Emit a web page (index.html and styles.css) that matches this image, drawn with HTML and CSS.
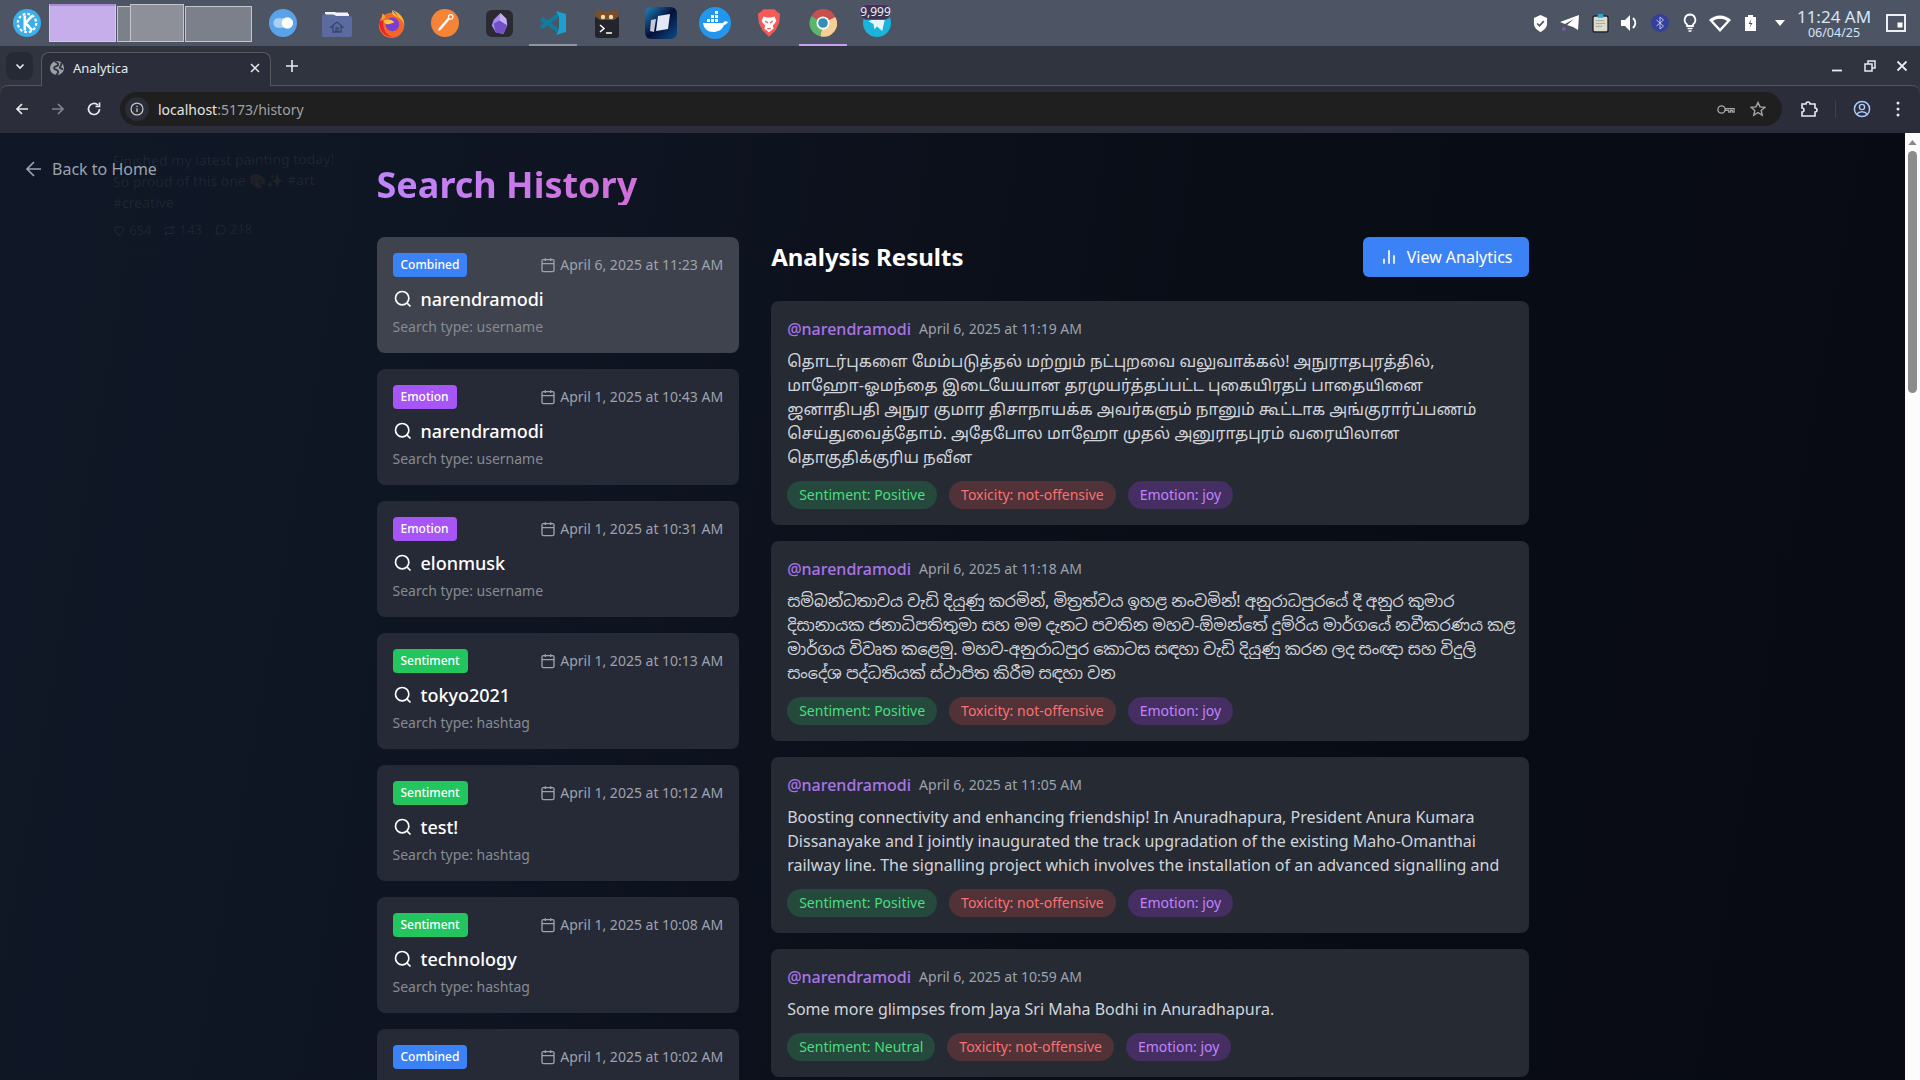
FILE: index.html
```html
<!DOCTYPE html>
<html lang="en">

    <head>
        <meta charset="UTF-8">
        <title>Analytica</title>
        <link rel="stylesheet" href="styles.css">
    </head>

    <body>
        <div class="taskbar">
            <div class="launcher">
                <svg viewBox="0 0 32 32" width="28" height="28">
                    <circle cx="16" cy="16" r="16" fill="#3daee9" />
                    <circle cx="16" cy="16" r="10.5" fill="none" stroke="#fff" stroke-width="2.6" stroke-dasharray="3.2 2.3" />
                    <path d="M13 8v16" stroke="#3daee9" stroke-width="6" />
                    <path d="M13.5 7.5v17M22 7.5l-7.5 8.5 7.5 8.5" fill="none" stroke="#fff" stroke-width="3" />
                </svg>
            </div>
            <div class="pager">
                <span class="desk desk-active"></span>
                <span class="desk"><i class="desk-win"></i></span>
                <span class="desk"></span>
            </div>
            <div class="apps">
                <span class="app">
                    <svg viewBox="0 0 32 32" width="28" height="28">
                        <circle cx="16" cy="16" r="16" fill="#5aa2ea" />
                        <rect x="5" y="10.5" width="22" height="11" rx="5.5" fill="#a9d0f5" />
                        <circle cx="21" cy="16" r="6.5" fill="#fff" />
                    </svg>
                </span>
                <span class="app">
                    <svg viewBox="0 0 30 28" width="30" height="28">
                        <path d="M3 3h10l2 2h12v6H3z" fill="#eeeef4" />
                        <path d="M0 7a2 2 0 0 1 2-2h9l3 2h14a2 2 0 0 1 2 2v17a2 2 0 0 1-2 2H2a2 2 0 0 1-2-2z" fill="#5c6b9f" />
                        <rect x="4" y="3.5" width="22" height="2" fill="#f4f4f8" />
                        <path d="M15 13l-6 5h2v5h8v-5h2zM14 23v-4h2v4" fill="none" stroke="#39446d" stroke-width="1.3" />
                    </svg>
                </span>
                <span class="app">
                    <svg viewBox="0 0 32 32" width="29" height="29">
                        <circle cx="16" cy="18" r="14" fill="#f4672b" />
                        <path d="M17 1c4 3 5 5 6 8 4 2 7 6 7 10 1-8-4-15-13-18z" fill="#fbb03b" />
                        <path d="M17 1c-1 4 1 7 6 8-3-3-4-5-6-8z" fill="#fcc73f" />
                        <circle cx="17" cy="17" r="7.5" fill="#7a3ed0" />
                        <path d="M7 13c4-2 10-2 12 2-3 1-7 3-10 1z" fill="#fdc63f" />
                        <path d="M2 13c0 10 6 18 15 18-7-2-11-9-10-18z" fill="#e8252a" />
                        <path d="M6 5c2 1 3 3 3 5l-4 2z" fill="#f9a13a" />
                    </svg>
                </span>
                <span class="app">
                    <svg viewBox="0 0 32 32" width="28" height="28">
                        <circle cx="16" cy="16" r="16" fill="#f58436" />
                        <path d="M8 25l3-1 11-13-2-2-11 13z" fill="#fff" />
                        <circle cx="22.5" cy="9" r="2.6" fill="none" stroke="#fff" stroke-width="1.2" />
                    </svg>
                </span>
                <span class="app">
                    <svg viewBox="0 0 28 28" width="27" height="27">
                        <rect x="0" y="0" width="28" height="28" rx="6" fill="#2a2a33" />
                        <path d="M15 3l6 6 1 7-4 9-8-2-4-7 2-6z" fill="#a88bf0" />
                        <path d="M15 3l-1 8 8 5-1-7z" fill="#c4b0f7" />
                        <path d="M8 14l6-3 8 5-4 9-8-2z" fill="#7350c8" />
                    </svg>
                </span>
                <span class="app app-open">
                    <svg viewBox="0 0 28 28" width="28" height="28">
                        <path d="M2 9.500L19 21.500M2 18.500L19 6.500" fill="none" stroke="#127a9c" stroke-width="4" />
                        <path d="M17 2l10 3v18l-10 3 3-6V8z" fill="#1b9fce" />
                    </svg>
                </span>
                <span class="app">
                    <svg viewBox="0 0 26 30" width="26" height="30">
                        <rect x="1" y="8" width="24" height="22" rx="3" fill="#23242c" />
                        <path d="M3 0l3 3h14l3-3 1 9-4 3H6L2 9z" fill="#7c4d2b" />
                        <path d="M0 7l5 2M26 7l-5 2" stroke="#7c4d2b" stroke-width="1.2" />
                        <circle cx="9" cy="9" r="2.2" fill="#eee0a8" />
                        <circle cx="17" cy="9" r="2.2" fill="#eee0a8" />
                        <path d="M6 17l4 3.500-4 3.500M12 25h6" fill="none" stroke="#fff" stroke-width="1.5" />
                    </svg>
                </span>
                <span class="app">
                    <svg viewBox="0 0 32 32" width="32" height="32">
                        <defs>
                            <linearGradient id="notion" x1="0" y1="0" x2="1" y2="1">
                                <stop offset="0" stop-color="#1d86c0" />
                                <stop offset="0.5" stop-color="#06103a" />
                                <stop offset="1" stop-color="#0b4d86" />
                            </linearGradient>
                        </defs>
                        <rect x="0" y="0" width="32" height="32" rx="6" fill="url(#notion)" />
                        <path d="M6 13l5-1-2 13-4-1z" fill="#c4c8d8" />
                        <path d="M13 9l12-2-2 15-12 2z" fill="#e4e8f4" />
                    </svg>
                </span>
                <span class="app">
                    <svg viewBox="0 0 32 32" width="32" height="32">
                        <circle cx="16" cy="16" r="16" fill="#2396ed" />
                        <path d="M4 16h20c1-2 3-2 5-1-1 2-3 3-4 3-2 5-6 7-11 7-5 0-9-3-10-9z" fill="#fff" />
                        <path d="M8 12h3v3H8zM12 12h3v3h-3zM16 12h3v3h-3zM12 8h3v3h-3zM16 8h3v3h-3zM16 4h3v3h-3z" fill="#fff" />
                    </svg>
                </span>
                <span class="app">
                    <svg viewBox="0 0 26 30" width="24" height="28">
                        <path d="M7 0h12l3 3 3 2-1 10-4 8-7 7-7-7-4-8L1 5l3-2z" fill="#f65a58" />
                        <path d="M7 8l4 1h4l4-1 2 5-4 5 1 3-5 4-5-4 1-3-4-5z" fill="#fff" />
                        <path d="M9 13l3 2M17 13l-3 2M11 21h4" stroke="#f65a58" stroke-width="1.4" />
                    </svg>
                </span>
                <span class="app app-active">
                    <svg viewBox="0 0 32 32" width="28" height="28">
                        <path d="M16 16L3 8a15 15 0 0 1 27 1z" fill="#c8504c" />
                        <path d="M16 16L3 8a15 15 0 0 0 10 23z" fill="#5cb56a" />
                        <path d="M16 16l14-7a15 15 0 0 1-17 22z" fill="#f5cf95" />
                        <circle cx="16" cy="16" r="7.500" fill="#fff" />
                        <circle cx="16" cy="16" r="5.500" fill="#2f8fb5" />
                    </svg>
                </span>
                <span class="app">
                    <svg viewBox="0 0 32 32" width="28" height="28">
                        <circle cx="16" cy="16" r="16" fill="#18b4dc" />
                        <path d="M6 14l20-7-4 18-6-5-3 3-1-6z" fill="#e6f5fb" />
                    </svg>
                    <span class="app-count">9,999</span>
                </span>
            </div>
            <div class="tray">
                <span class="tray-slot">
                    <svg viewBox="0 0 16 18" width="15" height="17">
                        <path d="M8 0l7 3v6c0 4-3 7-7 9-4-2-7-5-7-9V3z" fill="#fff" />
                        <path d="M4.500 9l2.500 2.500 4.500-5" fill="none" stroke="#4d5464" stroke-width="1.800" />
                    </svg>
                </span>
                <span class="tray-slot">
                    <svg viewBox="0 0 20 18" width="20" height="18">
                        <path d="M0 8L19 1l-1 15-5-3-6-2 7-6-9 5z" fill="#fff" />
                        <circle cx="4" cy="15" r="2" fill="#7a5aa6" />
                    </svg>
                </span>
                <span class="tray-slot">
                    <svg viewBox="0 0 18 20" width="17" height="19">
                        <rect x="1" y="2" width="16" height="17" rx="2" fill="#dcdccc" stroke="#23242c" stroke-width="1.500" />
                        <rect x="6" y="0" width="6" height="4" rx="1" fill="#2aa8d8" />
                        <path d="M4 7h9M4 10h10M4 13h7" stroke="#999" stroke-width="0.800" />
                    </svg>
                </span>
                <span class="tray-slot">
                    <svg viewBox="0 0 18 18" width="18" height="18">
                        <path d="M0 6h4l5-5v16l-5-5H0z" fill="#fff" />
                        <path d="M12 4c3 3 3 7 0 10" fill="none" stroke="#fff" stroke-width="2" />
                    </svg>
                </span>
                <span class="tray-slot">
                    <svg viewBox="0 0 18 18" width="18" height="18">
                        <circle cx="9" cy="9" r="9" fill="#33409c" />
                        <path d="M5.500 6l7 6-3.500 3V3l3.500 3-7 6" fill="none" stroke="#c8cfe8" stroke-width="0.900" />
                    </svg>
                </span>
                <span class="tray-slot">
                    <svg viewBox="0 0 14 20" width="14" height="20">
                        <path d="M7 1.500a5.500 5.500 0 0 0-3 10v1.500h6v-1.500a5.500 5.500 0 0 0-3-10z" fill="none" stroke="#fff" stroke-width="1.800" />
                        <path d="M4.500 15.500h5M5.500 18h3" stroke="#fff" stroke-width="1.300" />
                    </svg>
                </span>
                <span class="tray-slot">
                    <svg viewBox="0 0 22 18" width="22" height="18">
                        <path d="M0 6c6-6 16-6 22 0L11 18zM4 7l7 7.500L18 7c-4-3-10-3-14 0z" fill="#fff" fill-rule="evenodd" />
                    </svg>
                </span>
                <span class="tray-slot">
                    <svg viewBox="0 0 11 16" width="11" height="16">
                        <path d="M0 2h3V0h5v2h3v14H0z" fill="#fff" />
                        <path d="M6.500 4l-3 5h2.300L4.500 13l3-5H5.300z" fill="#4d5464" />
                    </svg>
                </span>
                <span class="tray-slot">
                    <svg viewBox="0 0 10 6" width="10" height="6">
                        <path d="M0 0h10L5 6z" fill="#fff" />
                    </svg>
                </span>
            </div>
            <div class="clock">
                <div class="clock-time">11:24 AM</div>
                <div class="clock-date">06/04/25</div>
            </div>
            <svg class="show-desktop" viewBox="0 0 20 18" width="20" height="18">
                <rect x="1" y="1" width="18" height="16" fill="none" stroke="#fff" stroke-width="1.800" />
                <rect x="11.500" y="8.500" width="5" height="5" fill="#fff" />
            </svg>
        </div>

        <div class="browser">
            <div class="tabstrip">
                <span class="tab-search">
                    <svg viewBox="0 0 12 12" width="12" height="12">
                        <path d="M2.500 4.500L6 8l3.500-3.500" fill="none" stroke="#e8eaed" stroke-width="1.600" />
                    </svg>
                </span>
                <div class="tab">
                    <svg viewBox="0 0 16 16" width="16" height="16">
                        <circle cx="8" cy="8" r="7" fill="#9aa0a6" />
                        <path d="M6 1.500C8 3 10 3 9 5S5 6 5 8s3 1 4 3-1 3-2 4M12 3c1 2 0 3-1 4s2 2 3 2" fill="none" stroke="#30343f" stroke-width="1.800" />
                    </svg>
                    <span class="tab-title">Analytica</span>
                    <svg viewBox="0 0 10 10" width="10" height="10">
                        <path d="M1 1l8 8M9 1l-8 8" stroke="#e8eaed" stroke-width="1.500" />
                    </svg>
                </div>
                <svg class="new-tab" viewBox="0 0 12 12" width="12" height="12">
                    <path d="M6 0v12M0 6h12" stroke="#e8eaed" stroke-width="1.600" />
                </svg>
                <div class="win-buttons">
                    <svg viewBox="0 0 12 12" width="12" height="12"><path d="M1 10.500h10" stroke="#e8eaed" stroke-width="1.800" /></svg>
                    <svg viewBox="0 0 12 12" width="12" height="12"><path d="M4 1h7v7H8V4H4zM1 4h7v7H1z" fill="none" stroke="#e8eaed" stroke-width="1.500" /></svg>
                    <svg viewBox="0 0 12 12" width="12" height="12"><path d="M1.500 1.500l9 9M10.500 1.500l-9 9" stroke="#e8eaed" stroke-width="1.800" /></svg>
                </div>
            </div>
            <div class="toolbar">
                <svg class="nav-btn" viewBox="0 0 16 16" width="16" height="16"><path d="M14 8H3M8 3L3 8l5 5" fill="none" stroke="#e8eaed" stroke-width="1.700" /></svg>
                <svg class="nav-btn" viewBox="0 0 16 16" width="16" height="16"><path d="M2 8h11M8 3l5 5-5 5" fill="none" stroke="#80858c" stroke-width="1.700" /></svg>
                <svg class="nav-btn" viewBox="0 0 16 16" width="16" height="16"><path d="M13.500 8a5.500 5.500 0 1 1-1.600-3.900M13.500 1.500v4h-4" fill="none" stroke="#e8eaed" stroke-width="1.700" /></svg>
                <div class="omnibox">
                    <span class="site-info">
                        <svg viewBox="0 0 16 16" width="14" height="14">
                            <circle cx="8" cy="8" r="6.800" fill="none" stroke="#c4c7c5" stroke-width="1.400" />
                            <path d="M8 7v4.500M8 4.200v1.500" stroke="#c4c7c5" stroke-width="1.500" />
                        </svg>
                    </span>
                    <span class="url"><span class="url-host">localhost</span>:5173/history</span>
                    <svg class="omni-key" viewBox="0 0 20 12" width="18" height="11">
                        <circle cx="5" cy="6" r="4" fill="none" stroke="#a8a8a8" stroke-width="1.500" />
                        <path d="M9 5h10v4h-2V7h-2v2h-2V7H9" fill="none" stroke="#a8a8a8" stroke-width="1.300" />
                    </svg>
                    <svg viewBox="0 0 16 16" width="16" height="16">
                        <path d="M8 1.500l2 4.400 4.700.5-3.500 3.200 1 4.700L8 11.500l-4.200 2.800 1-4.700L1.300 6.400 6 5.900z" fill="none" stroke="#a8a8a8" stroke-width="1.400" />
                    </svg>
                </div>
                <svg class="ext-icon" viewBox="0 0 18 18" width="18" height="18">
                    <path d="M2 4h4a2 2 0 0 1 4 0h5v4a2 2 0 0 1 0 4v4H2v-4a2 2 0 0 0 0-4z" fill="none" stroke="#e8eaed" stroke-width="1.600" />
                </svg>
                <span class="tool-sep"></span>
                <svg viewBox="0 0 18 18" width="18" height="18">
                    <circle cx="9" cy="9" r="7.600" fill="none" stroke="#a8c7fa" stroke-width="1.500" />
                    <circle cx="9" cy="7" r="2.600" fill="none" stroke="#a8c7fa" stroke-width="1.400" />
                    <path d="M4 14c2-3 8-3 10 0" fill="none" stroke="#a8c7fa" stroke-width="1.400" />
                </svg>
                <svg class="menu-dots" viewBox="0 0 4 16" width="4" height="16">
                    <circle cx="2" cy="2" r="1.500" fill="#e8eaed" />
                    <circle cx="2" cy="8" r="1.500" fill="#e8eaed" />
                    <circle cx="2" cy="14" r="1.500" fill="#e8eaed" />
                </svg>
            </div>

            <div class="viewport">
                <div class="page">
                    <div class="ghost-post">
                        <p>Finished my latest painting today!<br>So proud of this one 🎨✨ #art<br>#creative</p>
                        <div class="ghost-stats">
                            <span class="ghost-stat">
                                <svg viewBox="0 0 24 24" width="12" height="12"><path d="M12 21C6 16 3 13 3 8.500a5 5 0 0 1 9-3 5 5 0 0 1 9 3C21 13 18 16 12 21z" fill="none" stroke="currentColor" stroke-width="2" /></svg>
                                654
                            </span>
                            <span class="ghost-stat">
                                <svg viewBox="0 0 24 24" width="12" height="12"><path d="M17 2l4 4-4 4M3 11V9a3 3 0 0 1 3-3h15M7 22l-4-4 4-4M21 13v2a3 3 0 0 1-3 3H3" fill="none" stroke="currentColor" stroke-width="2" /></svg>
                                143
                            </span>
                            <span class="ghost-stat">
                                <svg viewBox="0 0 24 24" width="12" height="12"><path d="M3 21l2-5a9 9 0 1 1 3 3z" fill="none" stroke="currentColor" stroke-width="2" /></svg>
                                218
                            </span>
                        </div>
                    </div>
                    <a class="back-link" href="#">
                        <svg viewBox="0 0 24 24" width="24" height="24">
                            <path d="M12 19l-7-7 7-7M19 12H5" fill="none" stroke="currentColor" stroke-width="1.700" />
                        </svg>
                        Back to Home
                    </a>
                    <div class="container">
                        <h1 class="page-title">Search History</h1>
                        <div class="columns">
                            <div class="history" id="historyList"></div>
                            <div class="results">
                                <div class="results-head">
                                    <h2>Analysis Results</h2>
                                    <button class="btn-analytics">
                                        <svg viewBox="0 0 24 24" width="20" height="20">
                                            <path d="M18 20V10M12 20V4M6 20v-6" fill="none" stroke="#fff" stroke-width="2" />
                                        </svg>
                                        View Analytics
                                    </button>
                                </div>
                                <div class="result-list" id="resultList"></div>
                            </div>
                        </div>
                    </div>
                </div>
                <div class="scrollbar">
                    <svg viewBox="0 0 10 6" width="9" height="5"><path d="M0 6l5-6 5 6z" fill="#8a8a8a" /></svg>
                    <span class="scroll-thumb"></span>
                </div>
            </div>
        </div>

        <script>
            const searches = [
                ['Combined', 'April 6, 2025 at 11:23 AM', 'narendramodi', 'username'],
                ['Emotion', 'April 1, 2025 at 10:43 AM', 'narendramodi', 'username'],
                ['Emotion', 'April 1, 2025 at 10:31 AM', 'elonmusk', 'username'],
                ['Sentiment', 'April 1, 2025 at 10:13 AM', 'tokyo2021', 'hashtag'],
                ['Sentiment', 'April 1, 2025 at 10:12 AM', 'test!', 'hashtag'],
                ['Sentiment', 'April 1, 2025 at 10:08 AM', 'technology', 'hashtag'],
                ['Combined', 'April 1, 2025 at 10:02 AM', '', '']
            ];

            const posts = [
                ['April 6, 2025 at 11:19 AM', ['தொடர்புகளை மேம்படுத்தல் மற்றும் நட்புறவை வலுவாக்கல்! அநுராதபுரத்தில்,', 'மாஹோ-ஓமந்தை இடையேயான தரமுயர்த்தப்பட்ட புகையிரதப் பாதையினை', 'ஜனாதிபதி அநுர குமார திசாநாயக்க அவர்களும் நானும் கூட்டாக அங்குரார்ப்பணம்', 'செய்துவைத்தோம். அதேபோல மாஹோ முதல் அனுராதபுரம் வரையிலான', 'தொகுதிக்குரிய நவீன'], 'Positive'],
                ['April 6, 2025 at 11:18 AM', ['සම්බන්ධතාවය වැඩි දියුණු කරමින්, මිත්‍රත්වය ඉහළ නංවමින්! අනුරාධපුරයේ දී අනුර කුමාර', 'දිසානායක ජනාධිපතිතුමා සහ මම දැනට පවතින මහව-ඕමන්තේ දුම්රිය මාර්ගයේ නවීකරණය කළ', 'මාර්ගය විවෘත කළෙමු. මහව-අනුරාධපුර කොටස සඳහා වැඩි දියුණු කරන ලද සංඥා සහ විදුලි', 'සංදේශ පද්ධතියක් ස්ථාපිත කිරීම සඳහා වන'], 'Positive'],
                ['April 6, 2025 at 11:05 AM', ['Boosting connectivity and enhancing friendship! In Anuradhapura, President Anura Kumara', 'Dissanayake and I jointly inaugurated the track upgradation of the existing Maho-Omanthai', 'railway line. The signalling project which involves the installation of an advanced signalling and'], 'Positive'],
                ['April 6, 2025 at 10:59 AM', ['Some more glimpses from Jaya Sri Maha Bodhi in Anuradhapura.'], 'Neutral']
            ];

            const calIcon = '<svg viewBox="0 0 24 24" width="16" height="16"><rect x="3" y="4" width="18" height="18" rx="2" fill="none" stroke="currentColor" stroke-width="2"/><path d="M16 2v4M8 2v4M3 10h18" stroke="currentColor" stroke-width="2"/></svg>';
            const searchIcon = '<svg viewBox="0 0 24 24" width="20" height="20"><circle cx="11" cy="11" r="8" fill="none" stroke="#fff" stroke-width="2"/><path d="M21 21l-4.350-4.350" stroke="#fff" stroke-width="2"/></svg>';

            document.getElementById('historyList').innerHTML = searches.map(function (s, i) {
                const query = s[2] ? `
                    <div class="history-query">${searchIcon}${s[2]}</div>
                    <div class="history-type">Search type: ${s[3]}</div>` : '';
                return `
                <div class="history-card ${i === 0 ? 'selected' : ''}">
                    <div class="history-top">
                        <span class="badge badge-${s[0].toLowerCase()}">${s[0]}</span>
                        <span class="history-date">${calIcon}${s[1]}</span>
                    </div>${query}
                </div>`;
            }).join('');

            document.getElementById('resultList').innerHTML = posts.map(function (p) {
                return `
                <div class="result-card">
                    <div class="result-meta">
                        <span class="result-user">@narendramodi</span>
                        <span class="result-date">${p[0]}</span>
                    </div>
                    <p class="result-text">${p[1].join('<br>')}</p>
                    <div class="tags">
                        <span class="tag tag-green">Sentiment: ${p[2]}</span>
                        <span class="tag tag-red">Toxicity: not-offensive</span>
                        <span class="tag tag-purple">Emotion: joy</span>
                    </div>
                </div>`;
            }).join('');
        </script>
    </body>

</html>
```
FILE: styles.css
```css
* {
    box-sizing: border-box;
    margin: 0;
    padding: 0;
}

body {
    width: 1920px;
    height: 1080px;
    overflow: hidden;
    font-family: 'Noto Sans', 'Noto Sans Tamil', 'Noto Sans Sinhala', sans-serif;
    background: #0a0e17;
}

/* desktop panel */
.taskbar {
    height: 46px;
    background: #4d5464;
    display: flex;
    align-items: center;
}

.launcher {
    width: 49px;
    padding-left: 13px;
    display: flex;
}

.pager {
    display: flex;
    gap: 1px;
    height: 38px;
    align-items: flex-end;
}

.desk {
    width: 67px;
    height: 36px;
    border: 1px solid #c4c6cc;
    background: #7c808b;
    position: relative;
}

.desk-active {
    height: 38px;
    background: #c6aeea;
    border-color: #d6c6ee;
    border-top: 2px solid #a98ad6;
}

.desk-win {
    position: absolute;
    top: -3px;
    right: -1px;
    width: 54px;
    height: 38px;
    background: #8d9098;
    border: 1px solid #c4c6cc;
}

.apps {
    display: flex;
    margin-left: 4px;
    height: 46px;
}

.app {
    width: 54px;
    height: 46px;
    display: flex;
    align-items: center;
    justify-content: center;
    position: relative;
}

.app-open::after,
.app-active::after {
    content: '';
    position: absolute;
    left: 3px;
    right: 3px;
    bottom: 0;
    height: 2px;
    background: #8f95a3;
}

.app-active::after {
    background: #c79df0;
}

.app-count {
    position: absolute;
    top: 4px;
    left: 9px;
    width: 33px;
    height: 16px;
    line-height: 14px;
    text-align: center;
    font-size: 12px;
    color: #f0ecf6;
    background: #3a3550;
    border: 1px solid #63507f;
    border-radius: 8px;
}

.tray {
    margin-left: auto;
    display: flex;
    align-items: center;
}

.tray-slot {
    width: 30px;
    display: flex;
    align-items: center;
    justify-content: center;
}

.clock {
    width: 76px;
    margin-left: 1px;
    text-align: center;
    color: #d4e6fa;
}

.clock-time {
    font-size: 17px;
    line-height: 18px;
}

.clock-date {
    font-size: 12.500px;
    line-height: 13px;
}

.show-desktop {
    margin: 0 14px 0 14px;
}

/* browser chrome */
.browser {
    height: 1034px;
    display: flex;
    flex-direction: column;
    background: #30343f;
}

.tabstrip {
    height: 39px;
    display: flex;
    align-items: flex-end;
    flex-shrink: 0;
    position: relative;
}

.tab-search {
    width: 27px;
    height: 28px;
    border-radius: 8px;
    background: #262a34;
    margin: 0 0 5px 6px;
    display: flex;
    align-items: center;
    justify-content: center;
}

.tab {
    width: 230px;
    height: 34px;
    margin-left: 8px;
    margin-bottom: -1px;
    padding: 0 10px 4px 7px;
    background: #2b2e3a;
    border: 1px solid #55585f;
    border-bottom: none;
    border-radius: 8px 8px 0 0;
    display: flex;
    align-items: center;
    color: #e8eaed;
    font-size: 13px;
    position: relative;
    z-index: 1;
}

.tab-title {
    margin-left: 8px;
    flex: 1;
}

.new-tab {
    margin: 0 0 13px 15px;
}

.win-buttons {
    margin: 0 0 13px auto;
    display: flex;
    gap: 20.500px;
    padding-right: 12px;
}

.toolbar {
    height: 48px;
    background: #2b2e3a;
    border-top: 1px solid #55585f;
    border-radius: 8px 8px 0 0;
    display: flex;
    align-items: center;
    flex-shrink: 0;
    padding: 0 0 1px 14px;
}

.nav-btn {
    margin-right: 20px;
}

.omnibox {
    width: 1662px;
    height: 34px;
    margin-left: -2px;
    border-radius: 17px;
    background: #1f1f1f;
    display: flex;
    align-items: center;
    padding: 0 16px 0 5px;
    font-size: 14px;
    color: #a0a2a5;
}

.site-info {
    width: 24px;
    height: 24px;
    border-radius: 50%;
    background: #2a2d36;
    display: flex;
    align-items: center;
    justify-content: center;
    margin-right: 9px;
}

.url {
    flex: 1;
}

.url-host {
    color: #e3e3e3;
}

.omni-key {
    margin-right: 15px;
}

.ext-icon {
    margin-left: 18px;
}

.tool-sep {
    width: 1px;
    height: 18px;
    background: #3d414c;
    margin: 0 17px;
}

.menu-dots {
    margin-left: 25px;
}

/* page */
.viewport {
    flex: 1;
    display: flex;
    overflow: hidden;
    min-height: 0;
}

.page {
    flex: 1;
    position: relative;
    overflow: hidden;
    background: linear-gradient(100deg, #101827 0%, #0e1421 30%, #090d16 60%, #080b13 100%);
}

.scrollbar {
    width: 15px;
    background: #fcfcfc;
    display: flex;
    flex-direction: column;
    align-items: center;
    padding-top: 7px;
    gap: 6px;
}

.scroll-thumb {
    width: 9px;
    height: 242px;
    border-radius: 5px;
    background: #8c8c8c;
}

.ghost-post {
    position: absolute;
    left: 96px;
    top: 10px;
    width: 256px;
    height: 110px;
    padding: 5px 16px 0;
    border: 1px solid rgba(255, 255, 255, 0.012);
    border-radius: 8px;
    font-size: 14px;
    line-height: 21px;
    white-space: nowrap;
    color: rgba(255, 255, 255, 0.07);
    transform: rotate(-0.6deg);
}

.ghost-stats {
    display: flex;
    gap: 12px;
    margin-top: 7px;
    font-size: 13px;
}

.ghost-stat {
    display: flex;
    align-items: center;
    gap: 4px;
}

.back-link {
    position: absolute;
    left: 22px;
    top: 24px;
    display: flex;
    align-items: center;
    gap: 6px;
    height: 24px;
    font-size: 16px;
    color: #9ca3af;
    text-decoration: none;
}

.container {
    width: 1152px;
    margin-left: 376.500px;
    padding-top: 32px;
}

.page-title {
    font-size: 36px;
    line-height: 40px;
    font-weight: 700;
    color: #c084fc;
    background: linear-gradient(90deg, #c084fc, #d070d8);
    -webkit-background-clip: text;
    background-clip: text;
    -webkit-text-fill-color: transparent;
    width: fit-content;
    margin-bottom: 32px;
}

.columns {
    display: grid;
    grid-template-columns: repeat(3, minmax(0, 1fr));
    gap: 32px;
}

.history {
    display: flex;
    flex-direction: column;
    gap: 16px;
}

.history-card {
    height: 116px;
    padding: 16px;
    border-radius: 8px;
    background: #262a36;
}

.history-card.selected {
    background: #3f434e;
}

.history-top {
    display: flex;
    justify-content: space-between;
    align-items: center;
    height: 24px;
    margin-bottom: 8px;
}

.badge {
    height: 24px;
    line-height: 24px;
    padding: 0 8px;
    border-radius: 4px;
    font-size: 12px;
    font-weight: 500;
    color: white;
}

.badge-combined {
    background: #3b82f6;
}

.badge-emotion {
    background: #a855f7;
}

.badge-sentiment {
    background: #22c55e;
}

.history-date {
    display: flex;
    align-items: center;
    gap: 4px;
    height: 20px;
    line-height: 20px;
    font-size: 14px;
    color: #9ca3af;
}

.history-query {
    display: flex;
    align-items: center;
    gap: 8px;
    font-size: 18px;
    line-height: 28px;
    font-weight: 500;
    color: white;
}

.history-type {
    margin-top: 4px;
    font-size: 14px;
    line-height: 20px;
    color: #858a93;
}

.results {
    grid-column: span 2;
}

.results-head {
    display: flex;
    justify-content: space-between;
    align-items: center;
    height: 40px;
    margin-bottom: 24px;
}

.results-head h2 {
    font-size: 24px;
    line-height: 32px;
    font-weight: 700;
    color: white;
}

.btn-analytics {
    height: 40px;
    padding: 0 16px;
    border: none;
    border-radius: 6px;
    background: #3b82f6;
    color: white;
    font-family: inherit;
    font-size: 16px;
    display: flex;
    align-items: center;
    gap: 8px;
}

.result-list {
    display: flex;
    flex-direction: column;
    gap: 16px;
}

.result-card {
    padding: 16px;
    border-radius: 8px;
    background: #262a33;
}

.result-meta {
    display: flex;
    align-items: center;
    gap: 8px;
    height: 24px;
    margin-bottom: 8px;
}

.result-user {
    font-size: 16px;
    font-weight: 500;
    color: #a874ea;
}

.result-date {
    font-size: 14px;
    line-height: 20px;
    color: #9ca3af;
}

.result-text {
    font-size: 16px;
    line-height: 24px;
    color: #d1d5db;
    margin-bottom: 12px;
    white-space: nowrap;
}

.tags {
    display: flex;
    gap: 12px;
}

.tag {
    height: 28px;
    line-height: 28px;
    padding: 0 12px;
    border-radius: 14px;
    font-size: 14px;
}

.tag-green {
    background: #25493c;
    color: #4ade80;
}

.tag-red {
    background: #513238;
    color: #f87171;
}

.tag-purple {
    background: #452e62;
    color: #c084fc;
}
```
